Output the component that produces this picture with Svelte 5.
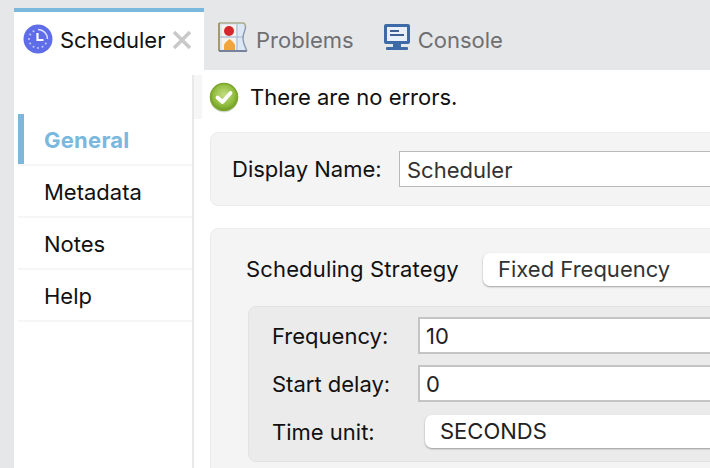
<script>
  let tabs = [
    { label: "Problems", icon: "problems" },
    { label: "Console", icon: "console" }
  ];
  let navItems = ["General", "Metadata", "Notes", "Help"];
  let active = "General";
</script>

<div class="app">
  <div class="tabbar">
    <div class="tab current">
      <svg class="clock" width="30" height="30" viewBox="0 0 30 30">
        <circle cx="15" cy="15" r="14.5" fill="#5f6ee8" />
        <path d="M15 5.5a9.5 9.5 0 0 1 9.5 9.5" fill="none" stroke="#dfe3ff" stroke-width="1.6" />
        <path d="M14.5 9v7h6" fill="none" stroke="#fff" stroke-width="2.2" />
        <g fill="#c3caff">
          <circle cx="6" cy="15" r="1" />
          <circle cx="7.2" cy="10.5" r="1" />
          <circle cx="7.2" cy="19.5" r="1" />
          <circle cx="10.5" cy="7.2" r="1" />
          <circle cx="10.5" cy="22.8" r="1" />
          <circle cx="15" cy="24" r="1" />
          <circle cx="19.5" cy="22.8" r="1" />
          <circle cx="22.8" cy="19.5" r="1" />
        </g>
      </svg>
      <span class="tab-label">Scheduler</span>
      <svg class="close" width="20" height="20" viewBox="0 0 20 20">
        <path d="M2 2l16 16M18 2L2 18" stroke="#c9c9c9" stroke-width="3.6" />
      </svg>
    </div>

    {#each tabs as tab}
      <div class="tab">
        {#if tab.icon === "problems"}
          <svg class="tab-icon" width="30" height="30" viewBox="0 0 30 30">
            <path d="M1 1h23.500c2 0 3 1.500 3 4 0 4-2.500 6-2.500 11s1.800 8 4 13H1z" fill="#dce8f6" />
            <path d="M4 3h14v11H4zM4 16h14v11H4z" fill="#f6f3ea" />
            <circle cx="11" cy="9" r="5" fill="#d4262c" />
            <path d="M6 28v-4.500c0-2 3-4.500 5.500-6.500 2.500 2 5.500 4.500 5.500 6.500V28z" fill="#f0a63c" />
            <path d="M19 2v26M2 15h24" stroke="#a9b6ca" stroke-width="1" fill="none" />
            <path d="M1 1h23.500c2 0 3 1.500 3 4" fill="none" stroke="#a9a98c" stroke-width="1.600" />
            <path d="M1 1v28" fill="none" stroke="#a39c6a" stroke-width="2" />
            <path d="M1 29h28" fill="none" stroke="#6b7890" stroke-width="1.800" />
            <path d="M27.500 5c0 4-2.500 6-2.500 11s1.800 8 4 13" fill="none" stroke="#8c99ae" stroke-width="1.400" />
          </svg>
        {:else}
          <svg class="tab-icon" width="26" height="26" viewBox="1 1 26 26">
            <rect x="1" y="1" width="26" height="20" rx="2" fill="#3f6aa8" />
            <rect x="4" y="4" width="20" height="14" fill="#e9f0fa" />
            <path d="M7 8h9M7 12h14" stroke="#3f5f94" stroke-width="2" />
            <path d="M10 21h8v3h-8z" fill="#3f6aa8" />
            <rect x="3" y="24" width="22" height="3" rx="1" fill="#3f6aa8" />
          </svg>
        {/if}
        <span class="tab-label">{tab.label}</span>
      </div>
    {/each}
  </div>

  <div class="body">
    <nav class="nav">
      {#each navItems as item}
        <div class="nav-item" class:active={item === active}>{item}</div>
      {/each}
    </nav>

    <main class="main">
      <div class="status">
        <span class="strip"></span>
        <svg class="ok" width="30" height="32" viewBox="0 0 30 32">
          <defs>
            <radialGradient id="ok" cx="50%" cy="42%" r="58%">
              <stop offset="0" stop-color="#c4de82" />
              <stop offset="0.7" stop-color="#8fbb3c" />
              <stop offset="1" stop-color="#6b9a22" />
            </radialGradient>
          </defs>
          <circle cx="15" cy="16.500" r="14" fill="#000" opacity="0.12" />
          <circle cx="15" cy="15" r="13.500" fill="url(#ok)" stroke="#7ca52e" stroke-width="1.500" />
          <path d="M8.500 15.500l5 4.500 8-9" fill="none" stroke="#fff" stroke-width="3.800" stroke-linecap="round" stroke-linejoin="round" />
        </svg>
        <span>There are no errors.</span>
      </div>

      <section class="card name-card">
        <label for="display-name">Display Name:</label>
        <input id="display-name" class="name-input" value="Scheduler" />
      </section>

      <section class="card strategy-card">
        <div class="strategy-row">
          <span class="strategy-label">Scheduling Strategy</span>
          <div class="select strategy-select">Fixed Frequency</div>
        </div>

        <div class="freq-box">
          <div class="freq-row">
            <label for="frequency">Frequency:</label>
            <input id="frequency" class="freq-input" value="10" />
          </div>
          <div class="freq-row">
            <label for="delay">Start delay:</label>
            <input id="delay" class="freq-input delay" value="0" />
          </div>
          <div class="freq-row unit-row">
            <span class="unit-label">Time unit:</span>
            <div class="select unit-select">SECONDS</div>
          </div>
        </div>
      </section>
    </main>
  </div>
</div>

<style>
  :global(body) {
    margin: 0;
    overflow: hidden;
    background: #e6e7e9;
  }

  .app {
    width: 710px;
    height: 468px;
    overflow: hidden;
    font-family: Inter, "Liberation Sans", sans-serif;
    font-size: 22px;
    line-height: 26px;
    color: #111;
  }

  .tabbar {
    display: flex;
    height: 70px;
    box-sizing: border-box;
    padding: 8px 0 0 14px;
  }

  .tab {
    display: flex;
    align-items: center;
    gap: 8px;
    padding: 2px 0 0 14px;
    margin-right: 16px;
    color: #6f6f72;
  }

  .tab:last-child {
    margin-right: 0;
  }

  .tab-icon {
    flex: none;
    margin: -6px 0 0;
  }

  .tab.current {
    width: 190px;
    flex: none;
    box-sizing: border-box;
    gap: 7px;
    background: #fff;
    border-top: 4px solid #7ab8de;
    color: #111;
    padding: 0 0 2px 9px;
    margin-right: 0;
  }

  .clock {
    flex: none;
    margin-top: -2px;
  }

  .tab-label {
    white-space: nowrap;
  }

  .close {
    flex: none;
  }

  .body {
    display: flex;
    margin-left: 14px;
    height: 398px;
    background: #fff;
  }

  .nav {
    width: 178px;
    flex: none;
    box-sizing: border-box;
    padding: 44px 0 0 4px;
  }

  .nav-item {
    height: 52px;
    box-sizing: border-box;
    padding: 13px 0 0 26px;
    border-bottom: 2px solid #f6f6f6;
  }

  .nav-item.active {
    color: #7ab8de;
    font-weight: 700;
    letter-spacing: 0.25px;
    box-shadow: inset 6px 0 0 #7ab8de;
  }

  .main {
    flex: none;
    width: 700px;
    margin-top: 5px;
    border-left: 2px solid #e9e9e9;
    padding: 0 0 0 16px;
    box-sizing: border-box;
  }

  .status {
    display: flex;
    align-items: center;
    height: 44px;
  }

  .strip {
    flex: none;
    align-self: stretch;
    width: 8px;
    margin-left: -16px;
    background: #f6f6f6;
  }

  .ok {
    flex: none;
    margin: 2px 11px 0 7px;
  }

  .card {
    background: #f4f4f4;
    border: 1px solid #ececec;
    border-radius: 8px;
  }

  .name-card {
    display: flex;
    align-items: center;
    height: 74px;
    box-sizing: border-box;
    margin-top: 13px;
    padding-left: 21px;
  }

  .name-card label {
    width: 167px;
    flex: none;
  }

  .name-input {
    flex: 1;
    height: 36px;
    box-sizing: border-box;
    border: 1px solid #b9b9b9;
    padding: 2px 7px 0;
    font: inherit;
    color: #333;
    background: #fff;
    outline: none;
  }

  .strategy-card {
    margin-top: 22px;
    padding: 23px 0 0 35px;
    height: 300px;
    box-sizing: border-box;
  }

  .strategy-row {
    display: flex;
    align-items: center;
    height: 34px;
  }

  .strategy-label {
    width: 237px;
    flex: none;
    letter-spacing: 0.15px;
  }

  .select {
    background: #fff;
    border-radius: 7px;
    box-shadow: 0 1px 2px rgba(0, 0, 0, 0.35);
    height: 33px;
    line-height: 32px;
    box-sizing: border-box;
    padding-left: 15px;
    color: #333;
    flex: 1;
  }

  .freq-box {
    margin: 20px 0 0 2px;
    height: 156px;
    box-sizing: border-box;
    background: #ebebeb;
    border: 1px solid #e3e3e3;
    border-radius: 8px;
    padding: 10px 0 0 23px;
  }

  .freq-row {
    display: flex;
    align-items: center;
    height: 37px;
    margin-bottom: 11px;
  }

  .freq-row label,
  .unit-label {
    width: 146px;
    flex: none;
  }

  .freq-input {
    flex: 1;
    height: 37px;
    box-sizing: border-box;
    border: 2px solid #c4c4c4;
    padding: 0 6px;
    font: inherit;
    color: #222;
    background: #fff;
    outline: none;
  }

  .unit-row {
    margin-top: 3px;
  }

  .unit-select {
    margin-left: 7px;
    color: #222;
  }
</style>
